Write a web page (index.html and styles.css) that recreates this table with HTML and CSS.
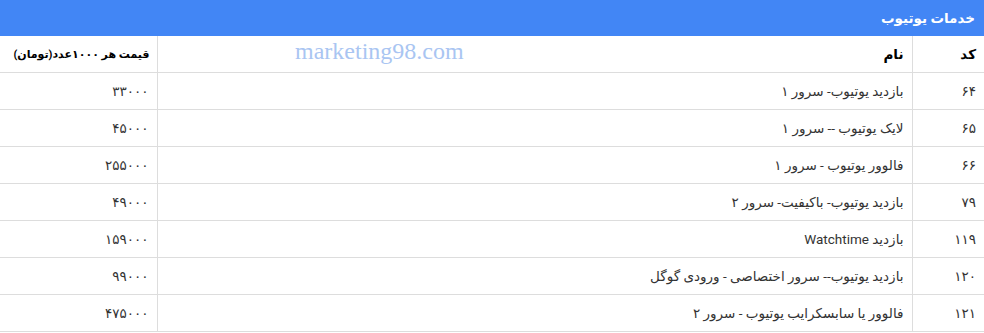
FILE: index.html
```html
<!DOCTYPE html>
<html lang="fa" dir="rtl">
<head>
<meta charset="utf-8">
<link rel="stylesheet" href="styles.css">
</head>
<body>
<div class="panel">
  <div class="panel-head">خدمات یوتیوب</div>
  <div class="watermark" dir="ltr">marketing98.com</div>
  <table class="services">
    <colgroup><col class="c-code"><col><col class="c-price"></colgroup>
    <thead>
      <tr><th>کد</th><th>نام</th><th class="h-price">قیمت هر ۱۰۰۰عدد(تومان)</th></tr>
    </thead>
    <tbody>
      <tr><td>۶۴</td><td>بازدید یوتیوب- سرور ۱</td><td>۳۳۰۰۰</td></tr>
      <tr><td>۶۵</td><td>لایک یوتیوب -- سرور ۱</td><td>۴۵۰۰۰</td></tr>
      <tr><td>۶۶</td><td>فالوور یوتیوب - سرور ۱</td><td>۲۵۵۰۰۰</td></tr>
      <tr><td>۷۹</td><td>بازدید یوتیوب- باکیفیت- سرور ۲</td><td>۴۹۰۰۰</td></tr>
      <tr><td>۱۱۹</td><td>بازدید Watchtime</td><td>۱۵۹۰۰۰</td></tr>
      <tr><td>۱۲۰</td><td>بازدید یوتیوب-- سرور اختصاصی - ورودی گوگل</td><td>۹۹۰۰۰</td></tr>
      <tr><td>۱۲۱</td><td>فالوور یا سابسکرایب یوتیوب - سرور ۲</td><td>۴۷۵۰۰۰</td></tr>
    </tbody>
  </table>
</div>
</body>
</html>
```
FILE: styles.css
```css
html, body { margin: 0; padding: 0; background: #fff; }
body { font-family: Roboto, "DejaVu Sans", sans-serif; font-size: 13.5px; color: #333; }
.panel { position: relative; }
.panel-head {
  background: #4286f5;
  color: #fff;
  height: 36px;
  line-height: 36px;
  padding: 0 9px;
  font-weight: bold;
  font-size: 13.5px;
}
.watermark {
  position: absolute;
  left: 295px;
  top: 38px;
  font-family: "Liberation Serif", serif;
  font-size: 24px;
  color: #a9c5f2;
}
.services { width: 100%; border-collapse: collapse; table-layout: fixed; }
.services th, .services td {
  border: 1px solid #ddd;
  height: 36px;
  padding: 0 8px;
  text-align: right;
  vertical-align: middle;
  white-space: nowrap;
}
.services tr > :first-child { border-right: 0; }
.services tr > :last-child { border-left: 0; }
.services thead th { border-top: 0; color: #000; font-weight: bold; }
.services .h-price { font-size: 11px; padding: 0 7px; }
.c-code { width: 72px; }
.c-price { width: 157px; }
```
